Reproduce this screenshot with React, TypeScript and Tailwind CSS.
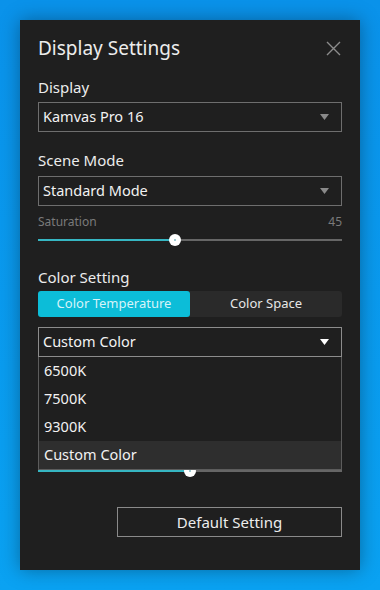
import React from "react";

const Caret = ({ color }: { color: string }) => (
  <svg width="9" height="6" viewBox="0 0 9 6" className="shrink-0">
    <path d="M0 0 H9 L4.5 6 Z" fill={color} />
  </svg>
);

const Select = ({ value, bright }: { value: string; bright?: boolean }) => (
  <div
    className={`flex h-[30px] items-center justify-between border pl-[4px] pr-[12px] ${
      bright ? "border-[#8c8c8c]" : "border-[#6e6e6e]"
    }`}
  >
    <span className="text-[14.5px] text-[#f2f2f2]">{value}</span>
    <Caret color={bright ? "#ffffff" : "#8a8a8a"} />
  </div>
);

const Slider = ({ pos }: { pos: number }) => (
  <div className="relative flex h-[12px] items-center">
    <div className="h-[2px] bg-[#36b6c2]" style={{ width: pos }} />
    <div className="h-[2px] flex-1 bg-[#666666]" />
    <div
      className="absolute top-0 flex h-[12px] w-[12px] items-center justify-center rounded-full bg-white"
      style={{ left: pos - 6 }}
    >
      <div className="h-[2px] w-[2px] rounded-full bg-[#7fb8c0]" />
    </div>
  </div>
);

export default function App() {
  const options = ["6500K", "7500K", "9300K", "Custom Color"];

  return (
    <div
      className="h-[590px] w-[380px] bg-gradient-to-b from-[#0a92ea] to-[#0aa2f2] p-[20px]"
      style={{ fontFamily: '"Noto Sans", "Open Sans", sans-serif' }}
    >
      <div className="flex h-[550px] w-[340px] flex-col bg-[#1f1f1f] px-[18px] pt-[14px] shadow-[0_0_18px_rgba(0,0,0,0.35)]">
        {/* header */}
        <div className="flex h-[28px] items-center justify-between">
          <h1 className="text-[19px] leading-[28px] text-[#ececec]">Display Settings</h1>
          <svg width="15" height="15" viewBox="0 0 15 15" className="mr-[1px]">
            <path d="M1 1 L14 14 M14 1 L1 14" stroke="#8c8c8c" strokeWidth="1.4" />
          </svg>
        </div>

        <div className="mt-[15px] text-[15px] leading-[20px] text-[#ececec]">Display</div>
        <div className="mt-[5px]">
          <Select value="Kamvas Pro 16" />
        </div>

        <div className="mt-[18px] text-[15px] leading-[20px] text-[#ececec]">Scene Mode</div>
        <div className="mt-[6px]">
          <Select value="Standard Mode" />
        </div>

        <div className="mt-[8px] flex justify-between text-[12px] leading-[16px] text-[#7a7a7a]">
          <span>Saturation</span>
          <span>45</span>
        </div>
        <div className="mt-[4px]">
          <Slider pos={137} />
        </div>

        <div className="mt-[21px] text-[15px] leading-[20px] text-[#ececec]">Color Setting</div>
        <div className="mt-[4px] flex h-[26px] rounded-[3px] bg-[#2a2a2a] text-[13px]">
          <div className="flex flex-1 items-center justify-center rounded-[3px] bg-[#0cbdd8] text-[#d6f3f8]">
            Color Temperature
          </div>
          <div className="flex flex-1 items-center justify-center text-[#e6e6e6]">Color Space</div>
        </div>

        <div className="relative z-10 mt-[10px]">
          <Select value="Custom Color" bright />
          <ul className="absolute left-0 right-0 top-[30px] border border-t-0 border-[#5c5c5c] bg-[#1f1f1f]">
            {options.map((o, i) => (
              <li
                key={o}
                className={`flex h-[28px] items-center pl-[5px] text-[14.5px] text-[#f2f2f2] ${
                  i === options.length - 1 ? "bg-[#2e2e2e]" : ""
                }`}
              >
                {o}
              </li>
            ))}
          </ul>
        </div>

        <div className="mt-[108px]">
          <Slider pos={152} />
        </div>

        <button className="mt-[30px] ml-auto h-[30px] w-[225px] border border-[#8a8a8a] text-[15px] text-[#ececec]">
          Default Setting
        </button>
      </div>
    </div>
  );
}
